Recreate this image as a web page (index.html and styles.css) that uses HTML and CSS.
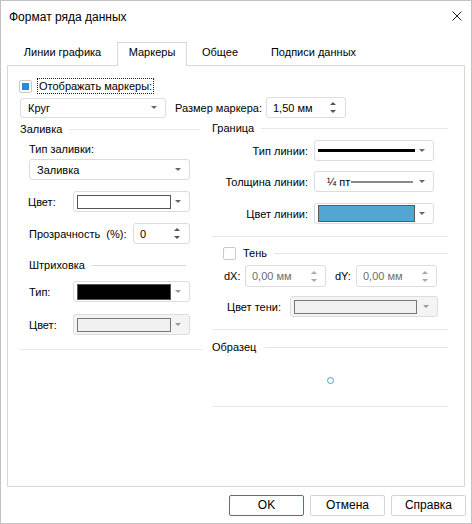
FILE: index.html
```html
<!DOCTYPE html>
<html lang="ru">
<head>
<meta charset="utf-8">
<title>Формат ряда данных</title>
<link rel="stylesheet" href="styles.css">
</head>
<body>
<div class="window">
  <div class="titlebar">
    <span class="title">Формат ряда данных</span>
    <svg class="close" viewBox="0 0 10 10" width="10" height="10"><path d="M0.5 0.5 L9.5 9.5 M9.5 0.5 L0.5 9.5" stroke="#222" stroke-width="1" fill="none"/></svg>
  </div>
  <div class="tabs">
    <div class="tab t1">Линии графика</div>
    <div class="tab t2 active">Маркеры</div>
    <div class="tab t3">Общее</div>
    <div class="tab t4">Подписи данных</div>
  </div>
  <div class="panel">
    <div class="showrow">
      <span class="check checked"></span>
      <span class="focus">Отображать маркеры:</span>
    </div>
    <div class="toprow">
      <div class="combo kind"><span class="val">Круг</span><span class="arrow"></span></div>
      <span class="sizelbl">Размер маркера:</span>
      <div class="spin size"><span class="val">1,50 мм</span><span class="spinbtn"><i class="up"></i><i class="down"></i></span></div>
    </div>
    <div class="cols">
      <div class="col left">
        <div class="hdr h-fill"><span>Заливка</span><span class="line"></span></div>
        <div class="sublbl">Тип заливки:</div>
        <div class="combo filltype"><span class="val">Заливка</span><span class="arrow"></span></div>
        <div class="row r-color">
          <span class="lbl lw">Цвет:</span>
          <div class="combo small"><span class="swatch white"></span><span class="arrow"></span></div>
        </div>
        <div class="row r-transp">
          <span class="lbl lt">Прозрачность&nbsp; (%):</span>
          <div class="spin tr"><span class="val">0</span><span class="spinbtn"><i class="up"></i><i class="down"></i></span></div>
        </div>
        <div class="hdr h-hatch"><span>Штриховка</span><span class="line"></span></div>
        <div class="row r-htype">
          <span class="lbl lw">Тип:</span>
          <div class="combo small"><span class="swatch black"></span><span class="arrow dim"></span></div>
        </div>
        <div class="row r-hcolor">
          <span class="lbl lw">Цвет:</span>
          <div class="combo small disabled"><span class="swatch grey"></span><span class="arrow dim"></span></div>
        </div>
        <div class="sep left-sep"></div>
      </div>
      <div class="col right">
        <div class="hdr h-border"><span>Граница</span><span class="line"></span></div>
        <div class="row rr r-ltype">
          <span class="rlbl">Тип линии:</span>
          <div class="combo wide"><span class="thick"></span><span class="arrow"></span></div>
        </div>
        <div class="row rr r-lwidth">
          <span class="rlbl">Толщина линии:</span>
          <div class="combo wide"><span class="qt">¼ пт</span><span class="thin"></span><span class="arrow"></span></div>
        </div>
        <div class="row rr r-lcolor">
          <span class="rlbl">Цвет линии:</span>
          <div class="combo wide"><span class="swatch blue"></span><span class="arrow"></span></div>
        </div>
        <div class="sep s1"></div>
        <div class="hdr h-shadow"><span class="check"></span><span>Тень</span><span class="line"></span></div>
        <div class="row r-dxy">
          <span class="dl">dX:</span>
          <div class="spin sm"><span class="val gray">0,00 мм</span><span class="spinbtn dim"><i class="up"></i><i class="down"></i></span></div>
          <span class="dl dy">dY:</span>
          <div class="spin sm"><span class="val gray">0,00 мм</span><span class="spinbtn dim"><i class="up"></i><i class="down"></i></span></div>
        </div>
        <div class="row r-scolor">
          <span class="slbl">Цвет тени:</span>
          <div class="combo shadow disabled"><span class="swatch grey"></span><span class="arrow dim"></span></div>
        </div>
        <div class="sep s2"></div>
        <div class="hdr h-sample"><span>Образец</span><span class="line"></span></div>
        <div class="sample"><span class="dot"></span></div>
        <div class="sep s3"></div>
      </div>
    </div>
  </div>
  <div class="buttons">
    <div class="btn default">OK</div>
    <div class="btn">Отмена</div>
    <div class="btn">Справка</div>
  </div>
</div>
</body>
</html>
```
FILE: styles.css
```css
* { box-sizing: border-box; }
html, body { margin: 0; padding: 0; background: #fff; }
body { font-family: "Liberation Sans", Arial, sans-serif; font-size: 11px; color: #000; }

.window { width: 472px; height: 524px; border: 1px solid #c2c2c2; background: #fff; }

.titlebar { height: 41px; display: flex; justify-content: space-between; align-items: flex-start; padding: 8px 9px 0 8px; }
.title { line-height: 16px; font-size: 12px; }
.close { margin-top: 2px; display: block; }

.tabs { display: flex; margin-left: 7px; height: 23px; position: relative; z-index: 1; }
.tab { line-height: 16px; padding-top: 2px; text-align: center; white-space: nowrap; height: 23px; }
.t1 { width: 109px; }
.t2 { width: 70px; }
.t3 { width: 66px; }
.t4 { width: 121px; }
.tab.active { border: 1px solid #d9d9d2; border-bottom: none; background: #fff; height: 24px; padding-top: 1px; }

.panel { margin-left: 6px; width: 458px; height: 422px; border: 1px solid #d9d9d2; }

.showrow { margin-top: 12px; height: 16px; display: flex; align-items: center; padding-left: 11px; }
.check { width: 13px; height: 13px; border: 1px solid #c9c9c9; border-radius: 2px; background: #fff; display: flex; align-items: center; justify-content: center; flex: none; }
.check.checked::before { content: ""; width: 7px; height: 7px; background: #2b8ad6; }
.focus { margin-left: 5px; border: 1px dotted #222; padding: 0 1px; line-height: 14px; }

.toprow { margin-top: 3px; height: 21px; display: flex; align-items: center; padding-left: 12px; }
.sizelbl { width: 91px; margin-left: 9px; white-space: nowrap; }

.combo { height: 21px; border: 1px solid #dcdcdc; border-radius: 3px; background: #fff; display: flex; align-items: center; padding: 0 8px 0 3px; }
.combo .val { flex: 1; padding-left: 4px; line-height: 14px; }
.combo.kind { width: 146px; height: 20px; }
.arrow { width: 0; height: 0; border-left: 3px solid transparent; border-right: 3px solid transparent; border-top: 3px solid #666; margin-left: auto; flex: none; }
.arrow.dim { border-top-color: #9a9a9a; }
.combo.disabled { background: #f4f4f4; }

.spin { height: 21px; border: 1px solid #dcdcdc; border-radius: 3px; background: #fff; display: flex; align-items: center; padding: 0 9px 0 6px; }
.spin .val { flex: 1; line-height: 14px; }
.spin .val.gray { color: #6d6d6d; }
.spin.size { width: 80px; }
.spinbtn { display: flex; flex-direction: column; gap: 5px; flex: none; }
.spinbtn i { display: block; width: 0; height: 0; border-left: 3px solid transparent; border-right: 3px solid transparent; }
.spinbtn i.up { border-bottom: 3px solid #555; }
.spinbtn i.down { border-top: 3px solid #555; }
.spinbtn.dim i.up { border-bottom-color: #a8a8a8; }
.spinbtn.dim i.down { border-top-color: #a8a8a8; }

.cols { display: flex; padding-left: 12px; }
.col.left { width: 182px; }
.col.right { width: 236px; margin-left: 10px; }

.hdr { display: flex; align-items: center; height: 14px; line-height: 14px; white-space: nowrap; }
.hdr .line { flex: 1; height: 1px; background: #e6e6e6; margin-left: 7px; }
.h-fill { margin-top: 4px; }
.h-fill .line { margin-right: 2px; }
.sublbl { margin-top: 6px; line-height: 14px; padding-left: 9px; }
.combo.filltype { margin-top: 3px; margin-left: 9px; width: 161px; }

.row { display: flex; align-items: center; height: 21px; }
.lbl { white-space: nowrap; }
.lw { width: 53px; padding-left: 9px; }
.r-color { margin-top: 11px; }
.r-color .lw { padding-left: 8px; }
.combo.small { width: 117px; }
.swatch { display: block; height: 14px; border: 1px solid #555; flex: none; }
.combo.small .swatch { width: 94px; margin-left: 0; }
.swatch.white { background: #fff; }
.swatch.black { background: #000; height: 16px; }
.swatch.grey { background: #f0f0f0; border-color: #777; }

.r-transp { margin-top: 11px; }
.lt { width: 113px; padding-left: 9px; }
.spin.tr { width: 57px; }

.h-hatch { margin-top: 14px; padding-left: 9px; }
.h-hatch .line { margin-right: 16px; margin-left: 7px; background: #d8d8d8; }
.r-htype { margin-top: 9px; }
.r-hcolor { margin-top: 12px; }
.sep { height: 1px; background: #e8e8e8; }
.left-sep { margin-top: 14px; }

.h-border { margin-top: 3px; }
.rlbl { width: 97px; text-align: right; padding-right: 1px; white-space: nowrap; margin-right: 5px; }
.combo.wide { width: 120px; padding-left: 3px; }
.r-ltype { margin-top: 5px; }
.r-lwidth { margin-top: 10px; }
.r-lcolor { margin-top: 11px; }
.thick { display: block; width: 97px; height: 3px; background: #000; flex: none; }
.qt { padding-left: 9px; flex: none; font-size: 11px; }
.thin { display: block; width: 62px; height: 2px; background: #8a8a8a; flex: none; margin-left: 1px; }
.combo.wide .swatch.blue { width: 97px; height: 17px; background: #52a6d2; border-color: #5a5a5a; }

.s1 { margin-top: 12px; }
.h-shadow { margin-top: 9px; padding-left: 11px; }
.h-shadow .check { margin-right: 7px; }
.h-shadow .line { margin-left: 7px; }

.r-dxy { margin-top: 5px; height: 22px; padding-left: 12px; }
.dl { width: 21px; }
.dl.dy { margin-left: 9px; }
.spin.sm { width: 81px; height: 22px; padding-right: 8px; }

.r-scolor { margin-top: 9px; padding-left: 15px; }
.slbl { width: 63px; white-space: nowrap; }
.combo.shadow { width: 148px; }
.combo.shadow .swatch { width: 123px; }

.s2 { margin-top: 12px; }
.h-sample { margin-top: 10px; }
.h-sample .line { margin-left: 9px; }
.sample { height: 52px; display: flex; justify-content: center; align-items: center; }
.dot { width: 7px; height: 7px; border: 1px solid #4a9fd0; border-radius: 50%; }

.buttons { display: flex; justify-content: flex-end; gap: 6px; padding-right: 5px; margin-top: 8px; }
.btn { width: 75px; height: 21px; border: 1px solid #d4d4d4; border-radius: 2px; background: #fff; text-align: center; line-height: 19px; font-size: 12px; }
.btn.default { border-color: #2a7cc6; }
```
